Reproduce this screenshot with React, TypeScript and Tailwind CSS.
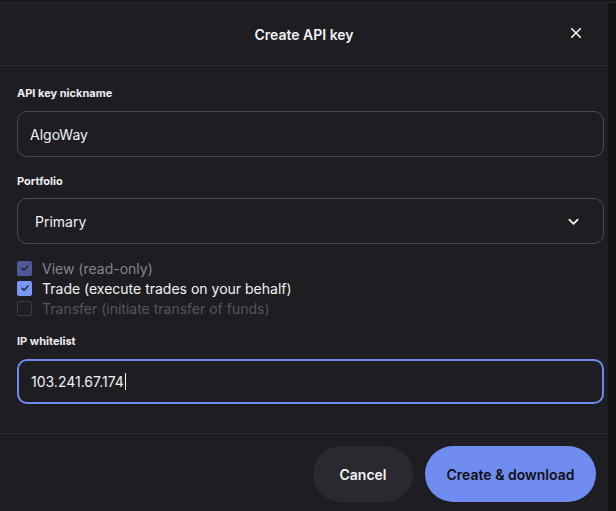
import React from "react";

function Check({ className }: { className?: string }) {
  return (
    <svg viewBox="0 0 14 14" className={className} fill="none" stroke="currentColor" strokeWidth="1.6" strokeLinecap="round" strokeLinejoin="round">
      <path d="M3.5 7.2 L6 9.5 L10.5 4.5" />
    </svg>
  );
}

export default function App() {
  return (
    <div className="w-[616px] h-[511px] bg-[#131316] overflow-hidden flex flex-col" style={{ fontFamily: "Inter, 'Noto Sans', sans-serif" }}>
      <div className="h-[3px] bg-[#17171b] border-b border-[#2a2a30]" />
      <div className="w-[608px] flex-1 bg-[#1d1d22] flex flex-col">
        <div className="h-[63px] border-b border-[#2c2c32] flex items-center justify-center relative">
          <span className="text-[14px] font-semibold text-[#f2f2f4]">Create API key</span>
          <svg viewBox="0 0 14 14" className="absolute left-[570px] top-[24px] w-[12px] h-[12px] text-white" fill="none" stroke="currentColor" strokeWidth="1.8" strokeLinecap="round">
            <path d="M2 2 L12 12 M12 2 L2 12" />
          </svg>
        </div>
        <div className="pl-[17px] pr-[4px] pt-[19px] flex flex-col">
          <div className="h-[16px] flex items-center text-[11px] font-bold text-[#eeeef0]">API key nickname</div>
          <div className="mt-[10px] h-[46px] w-[587px] rounded-[10px] border border-[#4a4a51] flex items-center pl-[12px] text-[14px] text-[#f0f0f2]">AlgoWay</div>

          <div className="mt-[16px] h-[16px] flex items-center text-[11px] font-bold text-[#eeeef0]">Portfolio</div>
          <div className="mt-[9px] h-[46px] w-[587px] rounded-[10px] border border-[#4a4a51] flex items-center justify-between pl-[17px] pr-[23px] text-[14px] text-[#f0f0f2]">
            <span>Primary</span>
            <svg viewBox="0 0 14 14" className="w-[13px] h-[13px] text-white" fill="none" stroke="currentColor" strokeWidth="1.8" strokeLinecap="round" strokeLinejoin="round">
              <path d="M2.5 5 L7 9.5 L11.5 5" />
            </svg>
          </div>

          <div className="mt-[14px] flex flex-col">
            <div className="h-[20px] flex items-center gap-[10px]">
              <div className="w-[15px] h-[15px] rounded-[2px] bg-[#4d5896] flex items-center justify-center text-[#1d1d22]">
                <Check className="w-[12px] h-[12px]" />
              </div>
              <span className="text-[14px] text-[#85858c]">View (read-only)</span>
            </div>
            <div className="h-[20px] flex items-center gap-[10px]">
              <div className="w-[15px] h-[15px] rounded-[2px] bg-[#7b97f6] flex items-center justify-center text-[#15151a]">
                <Check className="w-[12px] h-[12px]" />
              </div>
              <span className="text-[14px] text-[#f2f2f4]">Trade (execute trades on your behalf)</span>
            </div>
            <div className="h-[20px] flex items-center gap-[10px]">
              <div className="w-[15px] h-[15px] rounded-[2px] border border-[#3d3d44]" />
              <span className="text-[14px] text-[#55555c]">Transfer (initiate transfer of funds)</span>
            </div>
          </div>

          <div className="mt-[15px] h-[16px] flex items-center text-[11px] font-bold text-[#eeeef0]">IP whitelist</div>
          <div className="mt-[10px] h-[45px] w-[587px] rounded-[10px] border-2 border-[#6d8cf0] flex items-center pl-[12px] text-[14px] text-[#f0f0f2]">
            <span>103.241.67.174</span>
            <span className="w-[1px] h-[17px] bg-white ml-[1px]" />
          </div>
        </div>
        <div className="mt-[29px] border-t border-[#2c2c32] flex justify-end gap-[12px] pt-[12px] pr-[12px]">
          <button className="h-[56px] w-[100px] rounded-full bg-[#29292f] text-[14px] font-semibold text-[#f2f2f4]">Cancel</button>
          <button className="h-[56px] w-[171px] rounded-full bg-[#6f8df0] text-[14px] font-semibold text-[#101014]">Create &amp; download</button>
        </div>
      </div>
    </div>
  );
}
